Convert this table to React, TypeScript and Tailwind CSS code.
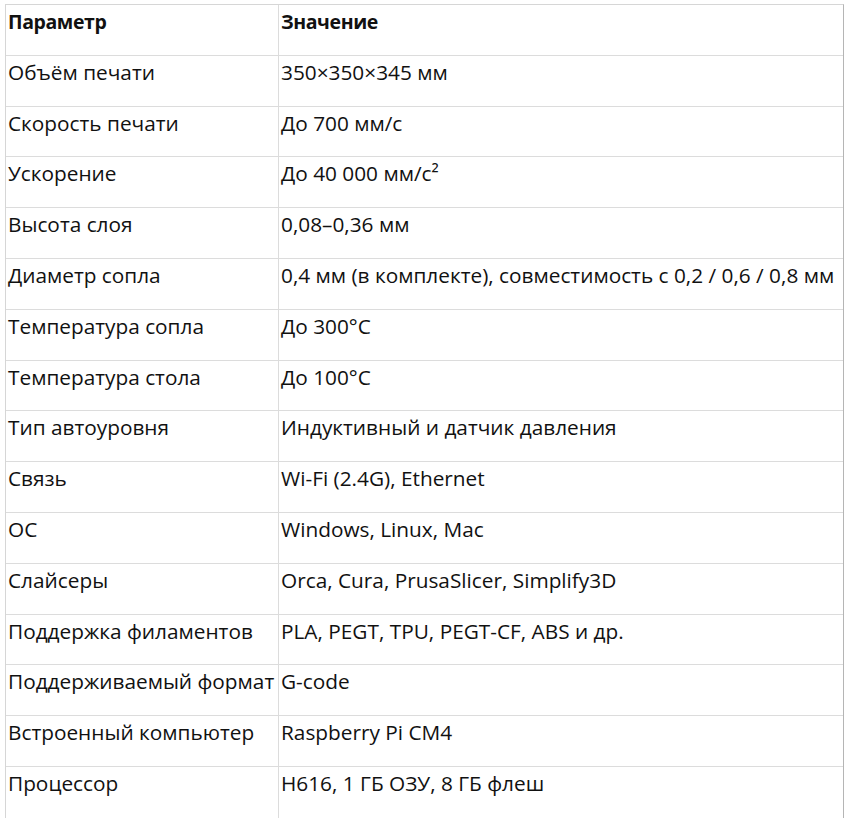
const specs: [string, string][] = [
  ['Объём печати', '350×350×345 мм'],
  ['Скорость печати', 'До 700 мм/с'],
  ['Ускорение', 'До 40 000 мм/с²'],
  ['Высота слоя', '0,08–0,36 мм'],
  ['Диаметр сопла', '0,4 мм (в комплекте), совместимость с 0,2 / 0,6 / 0,8 мм'],
  ['Температура сопла', 'До 300°C'],
  ['Температура стола', 'До 100°C'],
  ['Тип автоуровня', 'Индуктивный и датчик давления'],
  ['Связь', 'Wi-Fi (2.4G), Ethernet'],
  ['ОС', 'Windows, Linux, Mac'],
  ['Слайсеры', 'Orca, Cura, PrusaSlicer, Simplify3D'],
  ['Поддержка филаментов', 'PLA, PEGT, TPU, PEGT-CF, ABS и др.'],
  ['Поддерживаемый формат', 'G-code'],
  ['Встроенный компьютер', 'Raspberry Pi CM4'],
  ['Процессор', 'H616, 1 ГБ ОЗУ, 8 ГБ флеш'],
];

export default function App() {
  return (
    <div className="w-[847px] h-[818px] bg-white overflow-hidden pt-[4px] pl-[5px] font-['Open_Sans',sans-serif] text-[20.8px] leading-[28px] text-[#111]">
      <div className="w-[839px] border-t border-l border-[#d6d6d6] border-r-[#b5b5b5] border-r border-b border-b-[#b0b0b0]">
        {/* header */}
        <div className="grid grid-cols-[273px_1fr] h-[50.8px] border-b border-[#dcdcdc] font-bold text-[19.5px] tracking-[-0.4px]">
          <div className="border-r border-[#dcdcdc] pl-[2px] pt-[3px] whitespace-nowrap">Параметр</div>
          <div className="pl-[2px] pt-[3px] whitespace-nowrap">Значение</div>
        </div>
        {specs.map(([k, v], i) => (
          <div
            key={k}
            className={`grid grid-cols-[273px_1fr] h-[50.8px] ${i < specs.length - 1 ? 'border-b border-[#dcdcdc]' : ''}`}
          >
            <div className="border-r border-[#dcdcdc] pl-[2px] pt-[2px] whitespace-nowrap">{k}</div>
            <div className="pl-[2px] pt-[2px] whitespace-nowrap">{v}</div>
          </div>
        ))}
      </div>
    </div>
  );
}
